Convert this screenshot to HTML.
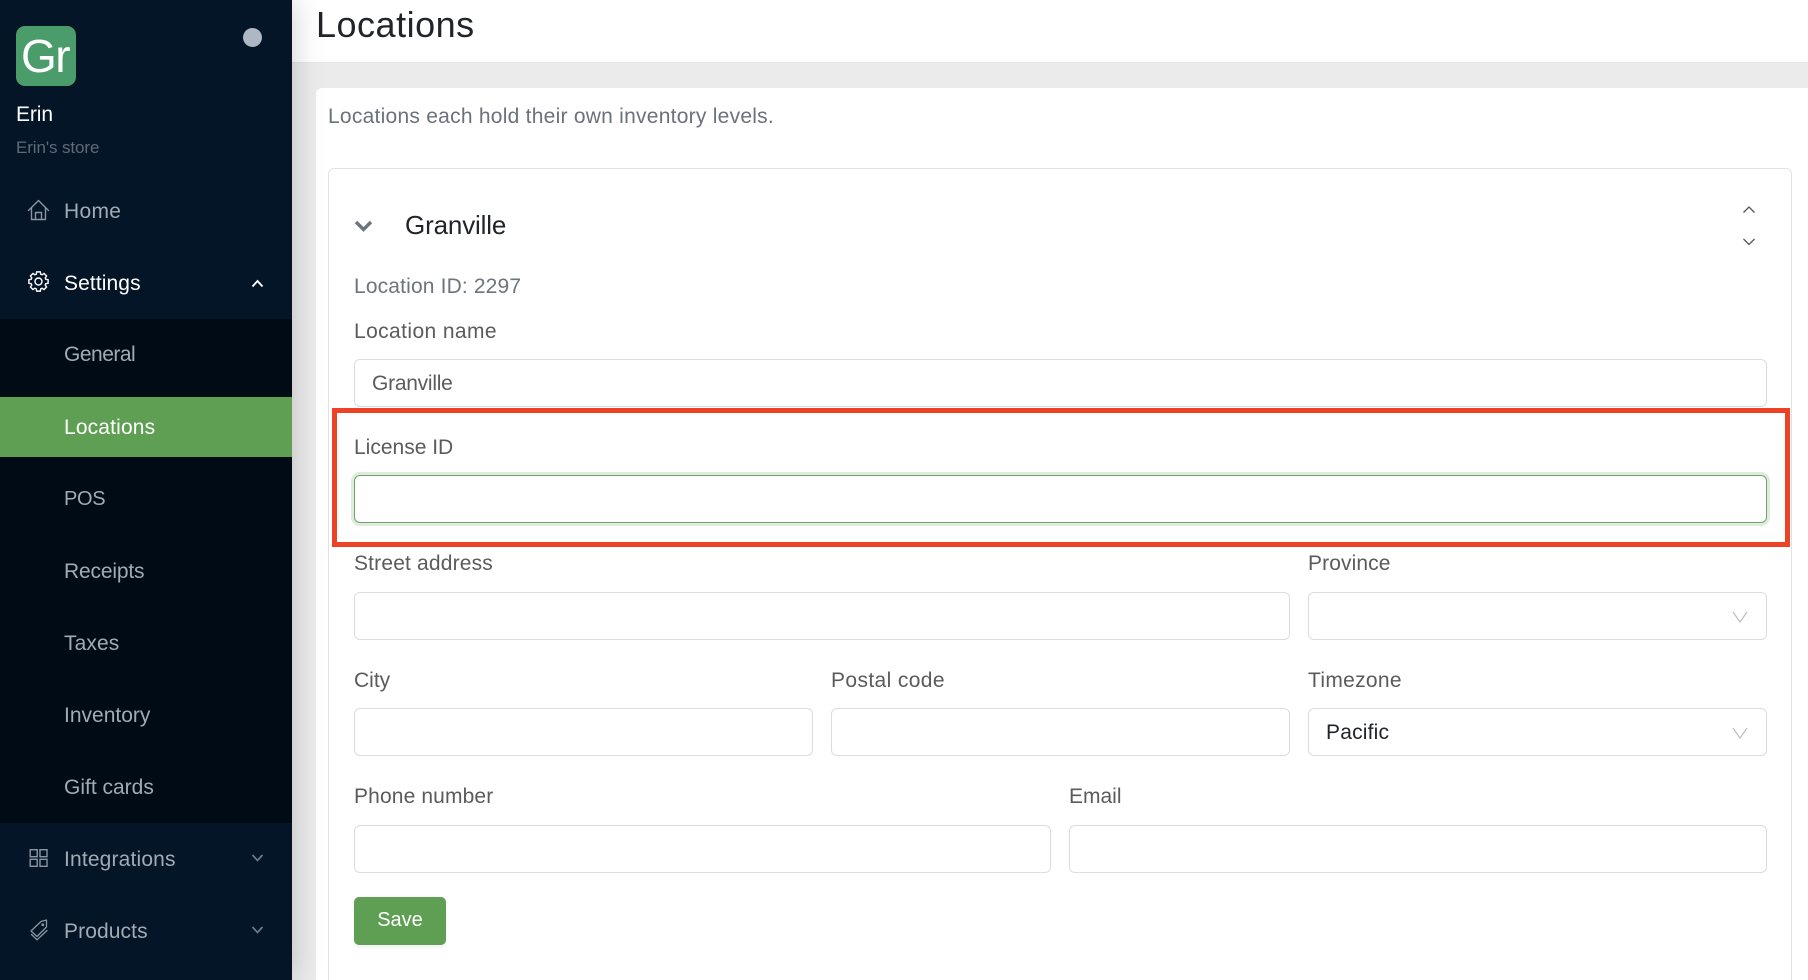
<!DOCTYPE html>
<html lang="en">
<head>
<meta charset="utf-8">
<title>Locations</title>
<style>
html,body{margin:0;padding:0;width:1808px;height:980px;overflow:hidden;background:#ebebeb;font-family:"Liberation Sans",Arial,sans-serif}
#w{position:relative;width:1808px;height:980px;overflow:hidden;background:#ebebeb}
.a{position:absolute;box-sizing:border-box}
.t{position:absolute;white-space:nowrap;height:30px;line-height:30px;font-size:21px}
.nav{left:64px;color:#a2aab4}
.lb{left:354px;color:#5b5b5b}
.in{position:absolute;box-sizing:border-box;background:#fff;border:1px solid #dcdcdc;border-radius:6px;height:48px}
</style>
</head>
<body>
<div id="w">
<!-- header -->
<div class="a" style="left:292px;top:0;width:1516px;height:63px;background:#fff;border-bottom:1px solid #e6e6e6"></div>
<!-- outer card -->
<div class="a" style="left:316px;top:88px;width:1492px;height:892px;background:#fff;border-radius:6px 0 0 0"></div>
<!-- inner card -->
<div class="a" style="left:328px;top:168px;width:1464px;height:830px;background:#fff;border:1px solid #e2e2e2;border-radius:6px"></div>

<div class="t" style="left:316px;top:4px;height:42px;line-height:42px;font-size:36px;color:#212529;letter-spacing:.5px">Locations</div>
<div class="t" style="left:328px;top:102px;color:#69727d;letter-spacing:.25px">Locations each hold their own inventory levels.</div>
<div class="t" style="left:405px;top:210px;font-size:26px;color:#212529;letter-spacing:-.15px">Granville</div>
<div class="t" style="left:354px;top:272px;color:#6c757d;letter-spacing:.15px">Location ID: 2297</div>

<div class="t lb" style="top:317px;letter-spacing:.4px">Location name</div>
<div class="in" style="left:354px;top:359px;width:1413px"></div>
<div class="t" style="left:372px;top:369px;color:#5b5b5b;letter-spacing:-.25px">Granville</div>

<div class="t lb" style="top:433px;letter-spacing:0">License ID</div>
<div class="in" style="left:354px;top:475px;width:1413px;border-color:#6ea765;box-shadow:0 0 0 3px #dfebdc"></div>

<div class="t lb" style="top:549px;letter-spacing:.17px">Street address</div>
<div class="in" style="left:354px;top:592px;width:936px"></div>
<div class="t lb" style="left:1308px;top:549px;letter-spacing:.1px">Province</div>
<div class="in" style="left:1308px;top:592px;width:459px"></div>

<div class="t lb" style="top:666px">City</div>
<div class="in" style="left:354px;top:708px;width:459px"></div>
<div class="t lb" style="left:831px;top:666px;letter-spacing:.38px">Postal code</div>
<div class="in" style="left:831px;top:708px;width:459px"></div>
<div class="t lb" style="left:1308px;top:666px;letter-spacing:.3px">Timezone</div>
<div class="in" style="left:1308px;top:708px;width:459px"></div>
<div class="t" style="left:1326px;top:718px;color:#212529;letter-spacing:.2px">Pacific</div>

<div class="t lb" style="top:782px;letter-spacing:.13px">Phone number</div>
<div class="in" style="left:354px;top:825px;width:697px"></div>
<div class="t lb" style="left:1069px;top:782px">Email</div>
<div class="in" style="left:1069px;top:825px;width:698px"></div>

<div class="a" style="left:354px;top:897px;width:92px;height:48px;border-radius:5px;background:#5f9f53;box-shadow:0 3px 3px rgba(0,0,0,.05);color:#fff;font-size:20px;line-height:47px;text-align:center">Save</div>

<!-- red highlight -->
<div class="a" style="left:332px;top:408px;width:1458px;height:139px;border:5px solid #ed4225"></div>

<!-- sidebar -->
<div class="a" style="left:0;top:0;width:292px;height:980px;background:#031527;box-shadow:0 0 30px rgba(0,0,0,.2)"></div>
<div class="a" style="left:0;top:319px;width:292px;height:504px;background:#010b16"></div>
<div class="a" style="left:0;top:397px;width:292px;height:60px;background:#5f9f53"></div>

<div class="a" style="left:16px;top:26px;width:60px;height:60px;border-radius:9px;background:#4a9d6b"></div>
<div class="t" style="left:21px;top:26px;height:60px;line-height:60px;font-size:46px;color:#fff;letter-spacing:-1.5px">Gr</div>
<div class="a" style="left:243px;top:28px;width:19px;height:19px;border-radius:50%;background:#aeb8c4"></div>
<div class="t" style="left:16px;top:100px;color:#fff;letter-spacing:-.1px">Erin</div>
<div class="t" style="left:16px;top:133px;font-size:17px;color:#5e6a78;letter-spacing:-.1px">Erin's store</div>

<div class="t nav" style="top:197px;letter-spacing:.3px">Home</div>
<div class="t nav" style="top:269px;color:#fff;letter-spacing:.1px">Settings</div>
<div class="t nav" style="top:340px;letter-spacing:-.5px">General</div>
<div class="t nav" style="top:413px;color:#fff;letter-spacing:.15px">Locations</div>
<div class="t nav" style="top:484px;font-size:20px;letter-spacing:-.3px">POS</div>
<div class="t nav" style="top:557px;letter-spacing:-.17px">Receipts</div>
<div class="t nav" style="top:629px;letter-spacing:.1px">Taxes</div>
<div class="t nav" style="top:701px">Inventory</div>
<div class="t nav" style="top:773px">Gift cards</div>
<div class="t nav" style="top:845px;letter-spacing:.16px">Integrations</div>
<div class="t nav" style="top:917px;letter-spacing:.1px">Products</div>

<svg class="a" style="left:0;top:0" width="1808" height="980" viewBox="0 0 1808 980" fill="none">
  <!-- home -->
  <g stroke="#8b95a2" stroke-width="1.4" stroke-linejoin="round" stroke-linecap="round">
    <path d="M28.5 210.5 38.5 200.5 48.5 210.5"/>
    <path d="M31.5 208V219.5H45.5V208"/>
    <path d="M35.5 219.5V212.5H41.5V219.5"/>
  </g>
  <!-- gear -->
  <g transform="translate(38.5 281.5)" stroke="#fff" stroke-width="1.4" stroke-linejoin="round">
    <path d="M7.27-2.22 9.62-1.87V1.87L7.27 2.22 6.71 3.57 8.12 5.48 5.48 8.12 3.57 6.71 2.22 7.27 1.87 9.62H-1.87L-2.22 7.27-3.57 6.71-5.48 8.12-8.12 5.48-6.71 3.57-7.27 2.22-9.62 1.87V-1.87L-7.27-2.22-6.71-3.57-8.12-5.48-5.48-8.12-3.57-6.71-2.22-7.27-1.87-9.62H1.87L2.22-7.27 3.57-6.71 5.48-8.12 8.12-5.48 6.71-3.57Z"/>
    <circle r="3.5"/>
  </g>
  <!-- grid -->
  <g stroke="#8b95a2" stroke-width="1.4">
    <rect x="30.2" y="849.7" width="7" height="7"/>
    <rect x="40" y="849.7" width="7" height="7"/>
    <rect x="30.2" y="859.3" width="7" height="7"/>
    <rect x="40" y="859.3" width="7" height="7"/>
  </g>
  <!-- tag -->
  <g stroke="#8b95a2" stroke-width="1.3" stroke-linejoin="round" stroke-linecap="round">
    <path d="M31 931 41 921.5 46.5 920V927L37 936.5Z"/>
    <circle cx="42.8" cy="924.8" r=".8"/>
    <path d="M31.5 934.5 37 939.8 47 930.5"/>
  </g>
  <!-- sidebar chevrons -->
  <path d="M252.5 286.5 257.5 281 262.5 286.5" stroke="#fff" stroke-width="1.9"/>
  <path d="M252.5 855 257.5 860.5 262.5 855" stroke="#6f7a88" stroke-width="1.7"/>
  <path d="M252.5 927 257.5 932.5 262.5 927" stroke="#6f7a88" stroke-width="1.7"/>
  <!-- card chevrons -->
  <path d="M356 222 363.5 229.5 371 222" stroke="#6b7480" stroke-width="3.4"/>
  <path d="M1743.5 212.5 1749 207 1754.5 212.5" stroke="#555" stroke-width="1.3"/>
  <path d="M1743.5 239 1749 244.5 1754.5 239" stroke="#555" stroke-width="1.3"/>
  <!-- select chevrons -->
  <path d="M1733 612 1740 622 1747 612" stroke="#bcbcbc" stroke-width="1.2"/>
  <path d="M1733 728 1740 738 1747 728" stroke="#bcbcbc" stroke-width="1.2"/>
</svg>
</div>
</body>
</html>
